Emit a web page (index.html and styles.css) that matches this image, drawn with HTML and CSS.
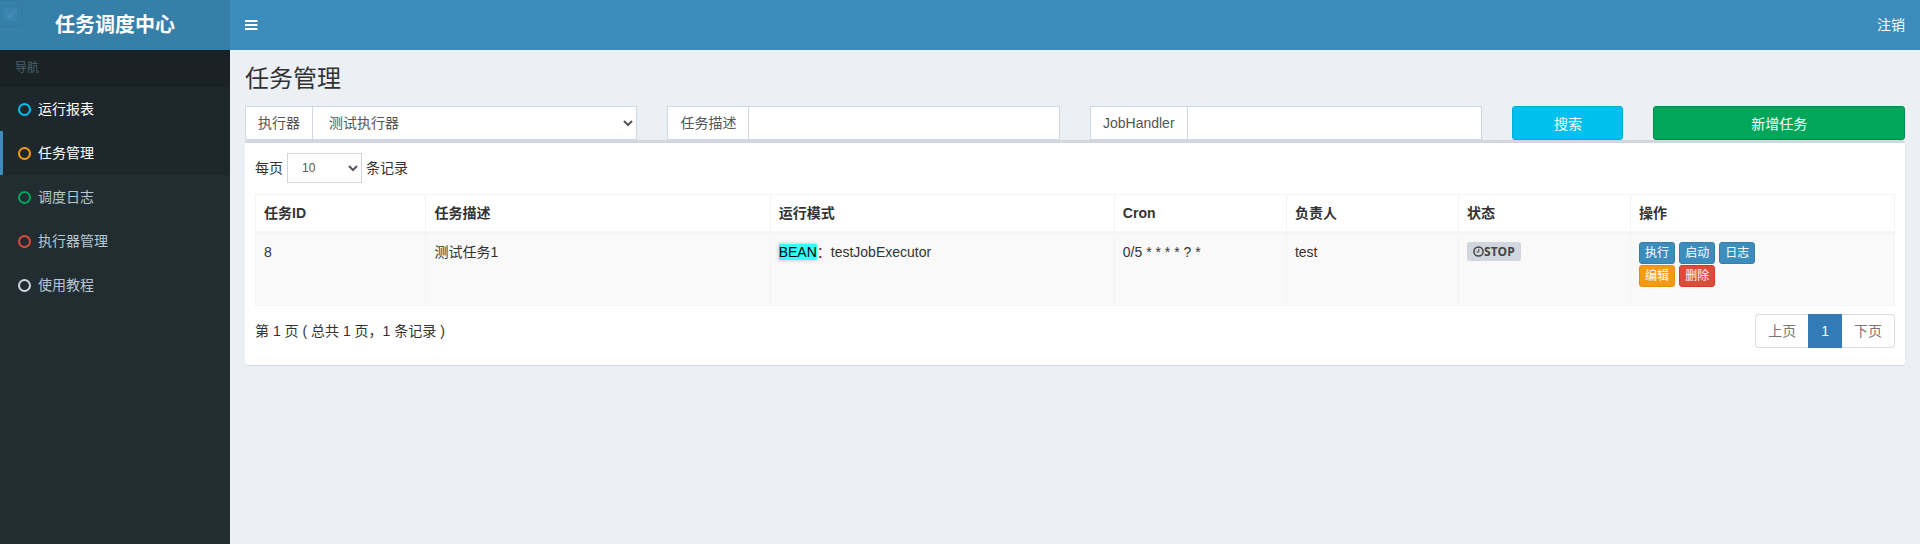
FILE: index.html
```html
<!DOCTYPE html>
<html lang="zh-CN">
<head>
<meta charset="utf-8">
<title>任务调度中心</title>
<link rel="stylesheet" href="styles.css">
</head>
<body>
<header class="main-header">
  <a class="logo" href="#">任务调度中心
    <svg class="logo-mark" width="24" height="28" viewBox="0 0 24 28" aria-hidden="true">
      <path d="M0 .5H19Q22.500 .5 22.500 4V22Q22.500 26 18 26H0" fill="#367fa9" stroke="#3279a5"/>
      <rect x="4" y="8" width="13" height="13" rx="1" fill="#3a84af"/>
      <path d="M7 14l3 3 5-6" fill="none" stroke="#458cb5" stroke-width="2"/>
    </svg>
  </a>
  <nav class="navbar">
    <button class="toggle" type="button" aria-label="切换导航">
      <svg width="13" height="12" viewBox="0 0 13 12"><path d="M0 2H12.500M0 6H12.500M0 10H12.500" stroke="#fff" stroke-width="2"/></svg>
    </button>
    <a class="logout" href="#">注销</a>
  </nav>
</header>
<div class="wrapper">
  <aside class="sidebar">
    <div class="nav-title">导航</div>
    <ul class="menu">
      <li><a class="item hover" href="#"><span class="ring aqua"></span>运行报表</a></li>
      <li><a class="item active" href="#"><span class="ring orange"></span>任务管理</a></li>
      <li><a class="item" href="#"><span class="ring green"></span>调度日志</a></li>
      <li><a class="item" href="#"><span class="ring red"></span>执行器管理</a></li>
      <li><a class="item" href="#"><span class="ring gray"></span>使用教程</a></li>
    </ul>
  </aside>
  <main class="content">
    <h1 class="title">任务管理</h1>
    <form class="filters">
      <div class="group"><label class="addon" for="group">执行器</label><select class="control" id="group"><option>测试执行器</option></select></div>
      <div class="group"><label class="addon" for="desc">任务描述</label><input class="control" id="desc" type="text"></div>
      <div class="group"><label class="addon" for="handler">JobHandler</label><input class="control" id="handler" type="text"></div>
      <button class="btn info" type="button">搜索</button>
      <button class="btn success" type="button">新增任务</button>
    </form>
    <section class="box">
      <div class="length">
        <label for="len">每页</label>
        <select class="control small" id="len"><option>10</option></select>
        <span>条记录</span>
      </div>
      <table class="table">
        <colgroup><col class="c-id"><col class="c-wide"><col class="c-wide"><col class="c-narrow"><col class="c-narrow"><col class="c-narrow"><col></colgroup>
        <thead>
          <tr><th>任务ID</th><th>任务描述</th><th>运行模式</th><th>Cron</th><th>负责人</th><th>状态</th><th>操作</th></tr>
        </thead>
        <tbody>
          <tr>
            <td>8</td>
            <td>测试任务1</td>
            <td><mark class="mode">BEAN</mark>：testJobExecutor</td>
            <td>0/5 * * * * ? *</td>
            <td>test</td>
            <td><span class="label"><svg width="11" height="11" viewBox="0 0 11 11" aria-hidden="true"><circle cx="5.500" cy="5.500" r="4.600" fill="none" stroke="#444" stroke-width="1.500"/><path d="M5.800 2.800V6H3.500" fill="none" stroke="#444"/></svg>STOP</span></td>
            <td>
              <div class="ops">
                <button class="btn xs primary" type="button">执行</button>
                <button class="btn xs primary" type="button">启动</button>
                <button class="btn xs primary" type="button">日志</button>
              </div>
              <div class="ops">
                <button class="btn xs warning" type="button">编辑</button>
                <button class="btn xs danger" type="button">删除</button>
              </div>
            </td>
          </tr>
        </tbody>
      </table>
      <div class="foot">
        <div>第 1 页 ( 总共 1 页，1 条记录 )</div>
        <nav class="pages"><a class="page" href="#">上页</a><a class="page current" href="#">1</a><a class="page" href="#">下页</a></nav>
      </div>
    </section>
  </main>
</div>
</body>
</html>
```

FILE: styles.css
```css
* { box-sizing: border-box; }
body {
  margin: 0;
  min-height: 100vh;
  display: flex;
  flex-direction: column;
  background: #ecf0f5;
  color: #333;
  font: 14px/20px "Liberation Sans", "Noto Sans CJK SC", sans-serif;
}
a { text-decoration: none; }
button, input, select { font-family: inherit; }

.main-header { display: flex; height: 50px; }
.logo {
  position: relative;
  width: 230px;
  background: #367fa9;
  color: #fff;
  font-size: 20px;
  font-weight: bold;
  line-height: 50px;
  text-align: center;
}
.logo-mark { position: absolute; left: 0; top: 0; }
.navbar {
  flex: 1;
  display: flex;
  align-items: center;
  justify-content: space-between;
  padding: 0 15px;
  background: #3c8dbc;
}
.toggle { display: flex; padding: 0; border: 0; background: none; }
.logout { color: #fff; }

.wrapper { flex: 1; display: flex; }
.sidebar { width: 230px; background: #222d32; }
.nav-title {
  padding: 8px 15px 9px;
  background: #1a2226;
  color: #4b646f;
  font-size: 12px;
}
.menu { margin: 0; padding: 0; list-style: none; }
.item {
  display: flex;
  align-items: center;
  gap: 7px;
  height: 44px;
  padding-left: 15px;
  border-left: 3px solid transparent;
  color: #b8c7ce;
}
.hover, .active { background: #1e282c; color: #fff; }
.active { border-left-color: #3c8dbc; }
.ring { width: 13px; height: 13px; border: 2px solid; border-radius: 50%; }
.aqua { color: #00c0ef; }
.orange { color: #f39c12; }
.green { color: #00a65a; }
.red { color: #dd4b39; }
.gray { color: #d2d6de; }

.content { flex: 1; min-width: 0; padding: 15px; }
.title { margin: 0 0 13px; font-size: 24px; font-weight: normal; line-height: 28px; }

.filters {
  display: grid;
  grid-template-columns: 393fr 393fr 393fr 111fr 252fr;
  gap: 30px;
}
.group { min-width: 0; display: flex; }
.addon {
  padding: 6px 12px;
  border: 1px solid #d2d6de;
  border-right: 0;
  background: #fff;
  color: #555;
  white-space: nowrap;
}
.control {
  flex: 1;
  min-width: 0;
  height: 34px;
  padding: 6px 12px;
  border: 1px solid #d2d6de;
  border-radius: 0;
  background-color: #fff;
  color: #555;
  font-size: 14px;
}
.small { flex: none; width: 75px; height: 30px; padding: 5px 10px; font-size: 12px; }

.btn {
  height: 34px;
  padding: 0 5px;
  border: 1px solid;
  border-radius: 3px;
  color: #fff;
  font-size: 14px;
}
.info { background: #00c0ef; border-color: #00acd6; }
.success { background: #00a65a; border-color: #008d4c; }
.xs { height: 22px; font-size: 12px; line-height: 18px; }
.primary { background: #3c8dbc; border-color: #367fa9; }
.warning { background: #f39c12; border-color: #e08e0b; }
.danger { background: #dd4b39; border-color: #d73925; }

.box {
  padding: 10px 10px 17px;
  border-top: 3px solid #d2d6de;
  border-radius: 3px;
  background: #fff;
  box-shadow: 0 1px 1px rgba(0, 0, 0, .1);
}
.length { display: flex; align-items: center; gap: 4px; margin-bottom: 11px; }

.table { width: 100%; table-layout: fixed; border-collapse: collapse; }
.c-id { width: 10.4%; }
.c-narrow { width: 10.5%; }
.c-wide { width: 21%; }
th, td {
  padding: 8px;
  border: 1px solid #f4f4f4;
  text-align: left;
  vertical-align: top;
}
th { border-bottom-width: 3px; }
td { height: 73px; background: #f9f9f9; }
.mode { background: #3ff; color: #000; box-shadow: 0 0 4px rgba(0, 0, 0, .25); }
.label {
  display: inline-flex;
  align-items: center;
  height: 19px;
  padding: 0 6px;
  border-radius: 3px;
  background: #d2d6de;
  color: #444;
  font: bold 12px/19px "Open Sans", sans-serif;
  vertical-align: top;
}
.ops { display: flex; gap: 4px; margin-bottom: 1px; }

.foot { display: flex; justify-content: space-between; align-items: center; margin-top: 8px; }
.pages { display: flex; }
.page {
  padding: 6px 12px;
  border: 1px solid #ddd;
  background: #fff;
  color: #777;
}
.page:first-child { border-right: 0; border-radius: 4px 0 0 4px; }
.page:last-child { border-left: 0; border-radius: 0 4px 4px 0; }
.current { border-color: #337ab7; background: #337ab7; color: #fff; }
```
